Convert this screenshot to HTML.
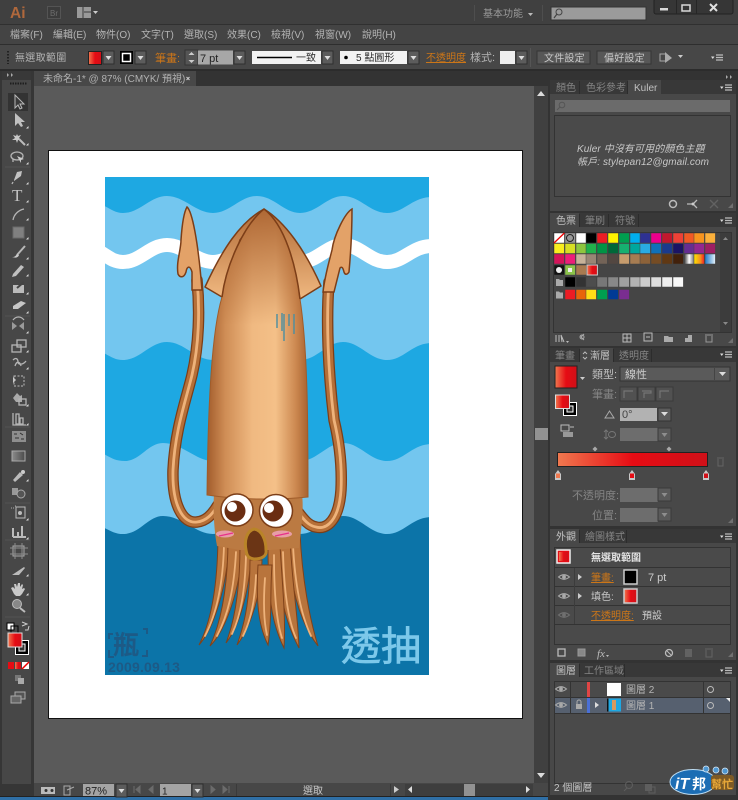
<!DOCTYPE html>
<html><head><meta charset="utf-8"><title>Illustrator</title>
<style>
html,body{margin:0;padding:0;width:738px;height:800px;overflow:hidden;background:#3c3c3c}
body>svg{display:block;filter:blur(.3px)}
text{font-family:"Liberation Sans","Noto Sans CJK TC",sans-serif;font-size:10px;fill:#b4b4b4}
.d{fill:#858585}.o{fill:#cc7618;text-decoration:underline}.w{fill:#e4e4e4}
.k{fill:#2c2c2c}
.i{fill:#b5b5b5}
.l{fill:none;stroke:#b5b5b5;stroke-width:1.3}
</style></head><body>
<svg width="738" height="800" viewBox="0 0 738 800" xmlns="http://www.w3.org/2000/svg">
<defs>
<clipPath id="artclip"><rect x="105" y="177" width="324" height="498"/></clipPath>
<linearGradient id="rg" x1="0" x2="1" y1="0" y2="0"><stop offset="0" stop-color="#f0794f"/><stop offset=".5" stop-color="#e60c14"/><stop offset="1" stop-color="#d01018"/></linearGradient>
<linearGradient id="body" x1="0" x2="1" y1="0" y2="0"><stop offset="0" stop-color="#a25c2c"/><stop offset=".18" stop-color="#cf8d55"/><stop offset=".45" stop-color="#f0b981"/><stop offset=".68" stop-color="#f4c088"/><stop offset=".88" stop-color="#cc8850"/><stop offset="1" stop-color="#a8622f"/></linearGradient>
<linearGradient id="shade" x1="0" x2="0" y1="0" y2="1"><stop offset="0" stop-color="#a85f2c" stop-opacity=".9"/><stop offset=".4" stop-color="#a85f2c" stop-opacity="0"/></linearGradient>
<linearGradient id="fin" x1="0" x2="0" y1="0" y2="1"><stop offset="0" stop-color="#b06a36"/><stop offset="1" stop-color="#f0b880"/></linearGradient>
<linearGradient id="gg" x1="0" x2="1"><stop offset="0" stop-color="#333"/><stop offset=".5" stop-color="#fff"/><stop offset="1" stop-color="#666"/></linearGradient>
<linearGradient id="gy" x1="0" x2="1"><stop offset="0" stop-color="#ffe300"/><stop offset=".6" stop-color="#f7941e"/><stop offset="1" stop-color="#ed1c24"/></linearGradient>
<linearGradient id="gb" x1="0" x2="1"><stop offset="0" stop-color="#1e78c8"/><stop offset="1" stop-color="#e8f4fc"/></linearGradient>
<linearGradient id="gt" x1="0" x2="1"><stop offset="0" stop-color="#8c8c8c"/><stop offset="1" stop-color="#4a4a4a"/></linearGradient>
<g id="dd"><rect width="11" height="13" fill="#5c5c5c" stroke="#2f2f2f"/><path d="M2.5 5h6l-3 4z" fill="#ddd"/></g>
<g id="ddd"><rect width="13" height="13" fill="#5a5a5a" stroke="#3a3a3a"/><path d="M3.5 5h6l-3 4z" fill="#8e8e8e"/></g>
<g id="eye"><path d="M-5.5 0Q0-4.5 5.5 0Q0 4.5-5.5 0Z" fill="none" stroke="#aaa" stroke-width="1.1"/><circle r="1.9" fill="#aaa"/></g>
<g id="mn"><path d="M0 1.500h3.500l-1.700 2.500z" fill="#ddd"/><path d="M5 0h7M5 2.500h7M5 5h7" stroke="#bbb" stroke-width="1.200"/></g>
<path id="tr" d="M0 2.500h2.500V0z" fill="#ddd"/>
</defs>

<!-- chrome -->
<rect width="738" height="800" fill="#3c3c3c"/>
<rect y="0" width="738" height="24" fill="#404040"/>
<rect y="24" width="738" height="1" fill="#303030"/>
<rect y="25" width="738" height="19" fill="#444"/>
<rect y="44" width="738" height="1" fill="#2e2e2e"/>
<rect y="45" width="738" height="24" fill="#474747"/>
<rect y="69" width="738" height="2" fill="#2c2c2c"/>

<!-- title bar -->
<text x="10" y="18" style="font-size:15.500px;font-weight:bold;fill:#b0683c">Ai</text>
<rect x="47.500" y="6.500" width="13" height="12" fill="#3c3c3c" stroke="#545454"/>
<text x="50" y="16" style="font-size:8px;fill:#6e6e6e">Br</text>
<rect x="77" y="7" width="14" height="11" fill="#999"/><path d="M83 7v11M84 12h7" stroke="#3c3c3c"/>
<path d="M93 11h5l-2.500 3z" fill="#ccc"/>
<path d="M474.500 5v16M542.500 5v16" stroke="#4e4e4e"/>
<text x="483" y="17" style="fill:#9a9a9a">基本功能</text>
<path d="M528 13h5l-2.500 3z" fill="#bbb"/>
<rect x="551" y="7" width="95" height="13" fill="#9b9b9b" stroke="#333"/>
<circle cx="559" cy="12" r="3" fill="none" stroke="#444"/><path d="M557 14l-3 4" stroke="#444" stroke-width="1.200"/>
<rect x="654" y="-1" width="79" height="15" rx="2" fill="#363636" stroke="#222"/>
<path d="M676.500 0v14M696.500 0v14" stroke="#262626"/>
<rect x="660" y="8" width="8" height="2.500" fill="#d8d8d8"/>
<rect x="682" y="5" width="8" height="6" fill="none" stroke="#d8d8d8" stroke-width="1.500"/>
<path d="M710 4l7 7M717 4l-7 7" stroke="#e0e0e0" stroke-width="2"/>

<!-- menu -->
<text x="10" y="38">檔案(F)</text><text x="53" y="38">編輯(E)</text><text x="96" y="38">物件(O)</text><text x="141" y="38">文字(T)</text><text x="184" y="38">選取(S)</text><text x="227" y="38">效果(C)</text><text x="271" y="38">檢視(V)</text><text x="315" y="38">視窗(W)</text><text x="362" y="38">說明(H)</text>

<!-- control bar -->
<path d="M8 51v13" stroke="#222" stroke-width="2" stroke-dasharray="1.500 1.500"/>
<text x="15" y="61" style="letter-spacing:.3px">無選取範圍</text>
<rect x="88.500" y="51.500" width="13" height="13" fill="url(#rg)" stroke="#222"/>
<use href="#dd" x="103" y="51"/>
<rect x="120" y="51" width="13" height="13" fill="#000"/><rect x="122.500" y="53.500" width="8" height="8" fill="#000" stroke="#fff" stroke-width="1.500"/>
<use href="#dd" x="135" y="51"/>
<text x="155" y="62" style="fill:#cc7618;font-size:11px">筆畫:</text>
<rect x="185" y="50" width="13" height="15" fill="#555" stroke="#333"/><path d="M191.500 52l-3 3h6zM191.500 63l-3-3h6z" fill="#ccc"/>
<rect x="198" y="50.500" width="35" height="14" fill="#a7a7a7"/>
<text x="200" y="62" style="fill:#222;font-size:11px">7 pt</text>
<use href="#dd" x="234" y="51"/>
<rect x="252" y="51" width="69" height="13" fill="#f2f2f2"/>
<path d="M257 57.500h35" stroke="#000" stroke-width="1.500"/>
<text x="296" y="61" class="k">一致</text>
<use href="#dd" x="322" y="51"/>
<rect x="340" y="51" width="67" height="13" fill="#f2f2f2"/>
<circle cx="346" cy="57.500" r="1.800" fill="#000"/><text x="356" y="61" class="k">5 點圓形</text>
<use href="#dd" x="408" y="51"/>
<text x="426" y="61" class="o">不透明度</text>
<text x="470" y="61" style="font-size:11px">樣式:</text>
<rect x="500" y="51" width="15" height="13" fill="#eee"/>
<use href="#dd" x="516" y="51"/>
<path d="M530.500 48v19" stroke="#555"/>
<rect x="537" y="51" width="53" height="13" fill="#575757" stroke="#353535"/><text x="544" y="61.500" style="fill:#c8c8c8;letter-spacing:.2px">文件設定</text>
<rect x="597" y="51" width="54" height="13" fill="#575757" stroke="#353535"/><text x="604" y="61.500" style="fill:#c8c8c8;letter-spacing:.2px">偏好設定</text>
<rect x="660" y="54" width="6" height="7" fill="none" stroke="#aaa"/><path d="M665 52l7 6-7 5z" fill="#aaa"/>
<path d="M678 55h5l-2.500 3z" fill="#ccc"/>
<use href="#mn" x="711" y="55"/>

<!-- toolbar -->
<rect x="0" y="71" width="34" height="729" fill="#363636"/>
<rect x="2" y="80" width="29" height="704" fill="#474747"/>
<rect x="2" y="71" width="29" height="9" fill="#383838"/>
<path d="M7 73l2 2-2 2zM11 73l2 2-2 2z" fill="#aaa"/>
<path d="M10 83.500h17" stroke="#1e1e1e" stroke-width="2" stroke-dasharray="1.500 1"/>
<rect x="8" y="93" width="20" height="18" fill="#333"/>
<path d="M5 167h25M5 316h25M5 427h25M5 503h25M5 540h25M5 617h25" stroke="#535353"/>
<!-- tools -->
<path d="M15 95v13l3-3 2 4 2-1-2-4h4z" fill="#3a3a3a" stroke="#b8b8b8"/>
<path d="M15 113v13l3-3 3 4 2-1-2-4h4z" fill="#c0c0c0"/>
<path d="M17 134l1 2 3-1-2 3 2 2-3 0-1 3-1-3-4 0 3-2-2-3 3 1z" fill="#c8c8c8"/><path d="M19 139l6 6" stroke="#bbb" stroke-width="2"/>
<ellipse cx="17" cy="156" rx="6" ry="4" class="l"/><path d="M17 156l7 3-3 1 0 3z" fill="#ccc"/><path d="M13 159v3" class="l"/>
<path d="M14 180l3-8 5-1-1 5-7 5z" fill="#c2c2c2"/><path d="M13 182l-1 2" class="l"/>
<text x="12" y="201" style="font-family:'Liberation Serif',serif;font-size:17px;fill:#c2c2c2">T</text>
<path d="M13 220c1-6 6-10 11-11" class="l"/>
<rect x="13" y="227" width="11" height="11" fill="#808080" stroke="#6a6a6a"/>
<path d="M25 246l-8 9" stroke="#b8b8b8" stroke-width="2"/><path d="M17 254c-2 3-3 3-5 3 3 1 6 1 7-2z" fill="#ccc"/>
<path d="M13 274l8-9 3 2-8 9-4 1z" fill="#c0c0c0"/>
<path d="M13 285h11v8H13z" fill="#bbb"/><path d="M17 288l7-6" stroke="#444" stroke-width="2"/>
<path d="M13 306l8-5 5 2-8 6h-5z" fill="#c6c6c6"/>
<path d="M12 322l5 4-5 4zM24 322l-5 4 5 4z" fill="#9a9a9a"/><path d="M13 320c3-4 8-4 11 0" class="l"/>
<rect x="12" y="345" width="9" height="7" class="l"/><rect x="17" y="340" width="9" height="7" class="l"/>
<path d="M13 360c3-3 5-1 5 2s5 3 8-1M15 366c2-6 5-4 6 0" class="l" stroke-width="2"/>
<path d="M13 377l3 3-3 3z" fill="#ccc"/><rect x="14" y="376" width="10" height="10" fill="none" stroke="#bbb" stroke-dasharray="2 1.500"/>
<path d="M13 398l4-5 3 3 2-1v7h-6z" fill="#aaa"/><rect x="19" y="399" width="7" height="6" class="l"/>
<path d="M13 413v12h13M16 414h3v10h-3zM20 418h3v6h-3z" class="l"/>
<rect x="12" y="431" width="14" height="11" fill="#8e8e8e"/><path d="M14 434h3M20 433l3 2M15 438h4M21 439h3" stroke="#333"/>
<rect x="12" y="451" width="13" height="10" fill="url(#gt)" stroke="#aaa"/>
<path d="M13 480l7-8 3 3-8 7z" fill="#bbb"/><circle cx="23" cy="472" r="2" fill="#ccc"/>
<rect x="12" y="488" width="6" height="7" fill="#999"/><circle cx="21" cy="494" r="4" fill="#555" stroke="#aaa"/>
<rect x="16" y="507" width="9" height="11" fill="none" stroke="#bbb"/><circle cx="20" cy="513" r="2" fill="#bbb"/><path d="M11 508h3M15 506h2" stroke="#aaa" stroke-dasharray="1 1"/>
<path d="M13 537v-9M18 537v-5M22 537v-11M13 537h13" stroke="#bbb" stroke-width="2"/>
<rect x="13" y="546" width="11" height="10" fill="none" stroke="#aaa"/><path d="M10 548h18M10 554h18M15 543v16M22 543v16" stroke="#8c8c8c"/>
<path d="M12 575l12-8 1 1-6 7z" fill="#bbb"/>
<path d="M14 594l-3-6 2-1 2 2-1-5h2l1 3 1-4h2v4l2-3 1 1-1 4 2-1 1 1-3 5-2 2h-4z" fill="#c8c8c8"/>
<circle cx="17" cy="604" r="4.500" fill="#888" stroke="#bbb"/><path d="M20 608l5 4" stroke="#bbb" stroke-width="2"/>
<rect x="7" y="623" width="7" height="7" fill="#fff" stroke="#000"/><rect x="11" y="626" width="7" height="7" fill="none" stroke="#000"/>
<path d="M22 622l5 2-5 2M29 626l-1 4-3 0" fill="none" stroke="#ccc"/>
<rect x="15.500" y="640.500" width="13" height="14" fill="#000" stroke="#fff"/><rect x="19" y="644" width="6" height="7" fill="#333" stroke="#fff"/>
<rect x="8" y="633" width="14" height="14" fill="url(#rg)" stroke="#ddd"/>
<rect x="8" y="662" width="6" height="7" fill="#e60c14"/><rect x="15" y="662" width="6" height="7" fill="url(#rg)"/><rect x="22" y="662" width="7" height="7" fill="#fff"/><path d="M22 669l7-7" stroke="#e00" stroke-width="1.500"/>
<rect x="15" y="675" width="6" height="6" fill="#777"/><rect x="18" y="678" width="6" height="6" fill="#aaa"/>
<rect x="15" y="692" width="10" height="7" fill="#555" stroke="#aaa"/><rect x="11" y="696" width="10" height="7" fill="#666" stroke="#aaa"/>
<use href="#tr" x="26" y="126"/><use href="#tr" x="26" y="143"/><use href="#tr" x="26" y="162"/><use href="#tr" x="26" y="182"/><use href="#tr" x="26" y="200"/><use href="#tr" x="26" y="218"/><use href="#tr" x="26" y="237"/><use href="#tr" x="26" y="257"/><use href="#tr" x="26" y="274"/><use href="#tr" x="26" y="292"/><use href="#tr" x="26" y="311"/><use href="#tr" x="26" y="331"/><use href="#tr" x="26" y="350"/><use href="#tr" x="26" y="367"/><use href="#tr" x="26" y="404"/><use href="#tr" x="26" y="423"/><use href="#tr" x="26" y="479"/><use href="#tr" x="26" y="518"/><use href="#tr" x="26" y="537"/><use href="#tr" x="26" y="574"/><use href="#tr" x="26" y="593"/>

<!-- doc tab strip -->
<rect x="34" y="71" width="514" height="15" fill="#333"/>
<rect x="34" y="71" width="162" height="15" fill="#484848"/>
<text x="43" y="82" style="fill:#b0b0b0">未命名-1* @ 87% (CMYK/ 預視)</text>
<path d="M186.500 77l3 3M189.500 77l-3 3" stroke="#ccc"/>

<!-- canvas -->
<rect x="34" y="86" width="500" height="697" fill="#5a5a5a"/>
<rect x="534" y="86" width="14" height="697" fill="#404040"/>
<path d="M537 96l4-5 4 5z" fill="#ddd"/><path d="M537 773l4 5 4-5z" fill="#ddd"/>
<rect x="535" y="428" width="13" height="12" fill="#929292"/>
<rect x="48.500" y="150.500" width="474" height="568" fill="#fff" stroke="#111"/>

<!-- art -->
<g clip-path="url(#artclip)">
<rect x="105" y="177" width="324" height="498" fill="#1ea8e2"/>
<path d="M100 204C110 208 114 213 123 213C140 213 150 196 167 196C184 196 196 213 213 213C230 213 240 196 257 196C274 196 284 213 300 213C317 213 327 196 343 196C360 196 370 213 387 213C404 213 412 197 432 197V680H100Z" fill="#73c6ef"/>
<path d="M100 252C110 258 114 262 123 262C140 262 150 245 167 245C184 245 196 262 213 262C230 262 240 245 257 245C274 245 284 262 300 262C317 262 327 245 343 245C360 245 370 262 387 262C404 262 412 246 432 246" fill="none" stroke="#fff" stroke-width="14"/>
<path d="M100 351C110 356 114 360 123 360C140 360 150 342 167 342C184 342 196 360 213 360C230 360 240 342 257 342C274 342 284 360 300 360C317 360 327 342 343 342C360 342 370 360 387 360C404 360 412 343 432 343V680H100Z" fill="#1ea8e2"/>
<path d="M100 452C110 457 114 461 125 461C140 461 148 443 163 443C182 443 196 461 213 461C230 461 240 443 257 443C274 443 284 461 300 461C317 461 327 443 343 443C360 443 370 461 387 461C404 461 412 444 432 444V680H100Z" fill="#73c6ef"/>
<path d="M100 526C110 530 114 534 123 534C140 534 148 516 163 516C182 516 196 534 213 534C230 534 240 516 257 516C274 516 284 534 300 534C317 534 327 516 343 516C360 516 370 534 387 534C404 534 412 517 432 517V680H100Z" fill="#0c74a8"/>

<!-- arms -->
<g fill="none" stroke-linecap="round">
<path d="M197 280C200 310 199 345 192 375C186 400 175 430 173 470C172 505 183 524 197 522C206 521 212 515 218 505" stroke="#7c3e18" stroke-width="11.500"/>
<path d="M197 280C200 310 199 345 192 375C186 400 175 430 173 470C172 505 183 524 197 522C206 521 212 515 218 505" stroke="#b56f38" stroke-width="9"/>
<path d="M197 280C200 310 199 345 192 375C186 400 175 430 173 470C172 505 183 524 197 522C206 521 212 515 218 505" stroke="#eeb27a" stroke-width="2.800"/>
<path d="M329 282C326 320 328 370 334 420C340 445 342 470 341 490C339 520 327 530 316 527C309 526 304 520 298 512" stroke="#7c3e18" stroke-width="11.500"/>
<path d="M329 282C326 320 328 370 334 420C340 445 342 470 341 490C339 520 327 530 316 527C309 526 304 520 298 512" stroke="#b56f38" stroke-width="9"/>
<path d="M329 282C326 320 328 370 334 420C340 445 342 470 341 490C339 520 327 530 316 527C309 526 304 520 298 512" stroke="#eeb27a" stroke-width="2.800"/>
</g>
<path d="M187 207C192 211 198 240 202 290L192 290L192 272C190 265 187 266 186 272C184 278 180 278 178 274C176 262 181 250 181 240C182 225 184 212 187 207Z" fill="#e3a268" stroke="#7c3e18" stroke-width="1.500"/>
<path d="M352 209C345 213 334 235 332 250C329 262 325 275 323 292L334 292L340 268C342 266 343 268 344 272C345 275 347 275 349 272C351 250 352 225 352 209Z" fill="#e3a268" stroke="#7c3e18" stroke-width="1.500"/>

<!-- tentacles -->
<g stroke="#80421a" stroke-width="1" fill="#b8743c">
<path d="M218 532C218 580 212 620 199 645C214 628 226 590 230 540Z"/>
<path d="M228 538C228 585 222 620 210 646C226 630 240 590 243 545Z"/>
<path d="M287 532C290 585 298 620 318 646C310 620 302 580 300 532Z"/>
<path d="M277 538C278 590 284 620 299 648C298 615 292 585 290 538Z"/>
<path d="M240 545C240 590 235 620 226 643C240 625 250 590 252 545Z"/>
<path d="M268 545C268 590 270 620 284 648C286 620 282 580 280 545Z"/>
<path d="M250 560C250 595 246 620 237 645C252 625 262 590 262 560Z"/>
<path d="M258 565C256 600 258 625 268 645C272 620 270 590 272 565Z"/>
</g>
<g fill="none" stroke="#eeb27a" stroke-width="1.800" stroke-linecap="round">
<path d="M224 545C223 585 216 615 205 636"/><path d="M236 552C234 590 228 615 217 636"/><path d="M246 556C245 590 241 615 232 634"/><path d="M256 575C255 600 251 620 243 636"/><path d="M265 578C263 605 264 622 267 635"/><path d="M274 555C274 590 276 620 282 638"/><path d="M283 552C284 590 288 620 296 638"/><path d="M293 545C295 585 301 615 311 636"/>
</g>
<!-- head -->
<path d="M214 494H302C304 510 301 530 299 548L270 550H240L217 546C214 530 213 510 214 494Z" fill="#bb7a42"/>
<!-- body -->
<path d="M264 209C240 222 222 250 205 287L222 297L240 240Z" fill="url(#fin)" stroke="#7c3e18" stroke-width="1.500" stroke-linejoin="round"/>
<path d="M264 209C285 222 305 250 321 286L300 299L285 240Z" fill="url(#fin)" stroke="#7c3e18" stroke-width="1.500" stroke-linejoin="round"/>
<path d="M264 209C244 225 226 265 222 297C212 330 208 400 207 495C240 500 280 500 308 497C308 430 308 350 300 299C296 265 285 225 264 209Z" fill="url(#body)" stroke="#a05c2a" stroke-width="1"/>
<path d="M264 209C244 225 226 265 222 297C212 330 208 400 207 495C240 500 280 500 308 497C308 430 308 350 300 299C296 265 285 225 264 209Z" fill="url(#shade)"/>
<path d="M264 209C244 225 226 265 222 297M264 209C285 225 296 265 300 299" fill="none" stroke="#7c3e18" stroke-width="1.500"/>
<path d="M277 314v14M282 313v18M284 314v27M289 314v12M294 314v20" stroke="#4f8fa0" stroke-width="1.600" opacity=".9"/>
<!-- face -->
<ellipse cx="225" cy="534" rx="9" ry="3.500" fill="#f4a6c0" opacity=".8"/><ellipse cx="282" cy="534" rx="10" ry="3.500" fill="#f4a6c0" opacity=".8"/>
<path d="M219 536l14-3M275 536l14-3" stroke="#e8308a" stroke-width="1.200"/>
<circle cx="237" cy="510" r="16" fill="#fff" stroke="#7c3e18" stroke-width="1.500"/><circle cx="276" cy="511" r="16.500" fill="#fff" stroke="#7c3e18" stroke-width="1.500"/>
<circle cx="235" cy="511" r="10.500" fill="#6a2d12"/><circle cx="273" cy="511" r="10.500" fill="#6a2d12"/>
<circle cx="232" cy="507" r="5" fill="#fff"/><circle cx="269" cy="508" r="5" fill="#fff"/>
<path d="M254 529C247 531 244 540 246 550C247 556 248 558 254 559C262 559 267 556 266 550C266 540 262 530 254 529Z" fill="#6b3515" stroke="#b98428" stroke-width="3"/>
<text x="341" y="660" style="font-size:40px;fill:#7cc8ea;stroke:#7cc8ea;stroke-width:.7px">透抽</text>
<text x="108" y="672" style="font-size:14px;font-weight:bold;fill:#1d5a86;letter-spacing:.2px">2009.09.13</text>
<text x="113" y="654" style="font-size:26px;fill:#1d5a86;font-weight:bold">瓶</text>
<path d="M113 634h-4v5M143 629h4v5M109 650v7h5M147 650v6h-5" fill="none" stroke="#1d5a86" stroke-width="2"/>
</g>

<!-- status bar -->
<rect x="34" y="783" width="514" height="13" fill="#474747"/>
<rect x="0" y="796" width="738" height="1" fill="#222"/>
<rect x="0" y="797" width="738" height="3" fill="#2f6fa6"/>
<rect x="41" y="787" width="14" height="7" fill="#bbb"/><circle cx="46" cy="790.500" r="1.500" fill="#333"/><circle cx="52" cy="790.500" r="1.500" fill="#333"/>
<path d="M64 786h6v9h-6zM67 790l7-3" fill="none" stroke="#aaa"/>
<rect x="83" y="784" width="31" height="12" fill="#a4a4a4"/><text x="85" y="794.500" style="fill:#222;font-size:11px">87%</text>
<use href="#dd" x="116" y="784"/>
<path d="M134 786v7M140 786l-4 3.500 4 3.500zM153 786l-4 3.500 4 3.500z" fill="#6b6b6b" stroke="#6b6b6b"/>
<rect x="160" y="784" width="31" height="12" fill="#a4a4a4"/><text x="162" y="794.500" style="fill:#222">1</text>
<use href="#dd" x="192" y="784"/>
<path d="M211 786l4 3.500-4 3.500zM223 786l4 3.500-4 3.500zM229 786v7" fill="#6b6b6b" stroke="#6b6b6b"/>
<path d="M236.500 784v12M390.500 784v12" stroke="#3a3a3a"/>
<text x="303" y="794" style="fill:#c8c8c8">選取</text>
<path d="M394 786l5 3.500-5 3.500z" fill="#ccc"/>
<rect x="405" y="784" width="128" height="12" fill="#3e3e3e"/>
<path d="M412 786l-4 3.500 4 3.500zM526 786l4 3.500-4 3.500z" fill="#ddd"/>
<rect x="464" y="784" width="11" height="12" fill="#929292"/>

<!-- right panels -->
<rect x="548" y="71" width="190" height="729" fill="#333"/>
<path d="M726 75l2 2-2 2zM730 75l2 2-2 2z" fill="#aaa"/>

<!-- Kuler -->
<rect x="550" y="80" width="186" height="131" fill="#484848"/>
<rect x="550" y="80" width="186" height="14" fill="#383838"/>
<rect x="628" y="80" width="33" height="15" fill="#484848"/>
<path d="M579.500 81v13M627.500 81v13" stroke="#2c2c2c"/>
<text x="556" y="91" class="d">顏色</text><text x="586" y="91" class="d">色彩參考</text><text x="634" y="91" style="fill:#c0c0c0">Kuler</text>
<use href="#mn" x="720" y="85"/>
<rect x="555" y="100" width="175" height="12" fill="#6b6b6b"/>
<circle cx="562" cy="105" r="2.800" fill="none" stroke="#555"/><path d="M560 107l-3 3" stroke="#555"/>
<rect x="554.500" y="115.500" width="176" height="81" fill="#4a4a4a" stroke="#333"/>
<text x="577" y="152" style="fill:#c8c8c8;font-style:italic;letter-spacing:.1px">Kuler 中沒有可用的顏色主題</text>
<text x="577" y="165" style="fill:#c8c8c8;font-style:italic;letter-spacing:.1px">帳戶: stylepan12@gmail.com</text>
<circle cx="673" cy="204" r="3.500" fill="none" stroke="#bbb" stroke-width="1.500"/>
<path d="M687 204h7M697 200l-4 4 4 4" fill="none" stroke="#bbb" stroke-width="1.300"/><circle cx="693" cy="204" r="1.500" fill="#ccc"/>
<path d="M710 200l8 8M718 200l-8 8" stroke="#626262" stroke-width="1.300"/>
<path d="M728 208h5v-5zM731 209v-1" fill="#707070"/>

<!-- Swatches -->
<rect x="550" y="213" width="186" height="133" fill="#484848"/>
<rect x="550" y="213" width="186" height="14" fill="#383838"/>
<rect x="550" y="213" width="29" height="15" fill="#484848"/>
<path d="M579.500 214v13M608.500 214v13M638.500 214v13" stroke="#2c2c2c"/>
<text x="556" y="224" style="fill:#c0c0c0">色票</text><text x="585" y="224" class="d">筆刷</text><text x="615" y="224" class="d">符號</text>
<use href="#mn" x="720" y="218"/>
<rect x="553.500" y="232.500" width="178" height="100" fill="#454545" stroke="#333"/>
<rect x="720" y="233" width="11" height="99" fill="#3c3c3c"/>
<path d="M723 240l2.500-3 2.500 3zM723 322l2.500 3 2.500-3z" fill="#888"/>
<g stroke="#444" stroke-width=".5">
<rect x="554" y="233" width="10.400" height="10" fill="#fff"/>
<rect x="565" y="233" width="10.400" height="10" fill="#999"/>
<rect x="576" y="233" width="10.400" height="10" fill="#fff"/><rect x="586" y="233" width="10.400" height="10" fill="#000"/><rect x="597" y="233" width="10.400" height="10" fill="#ed1c24" /><rect x="608" y="233" width="10.400" height="10" fill="#fff200"/><rect x="619" y="233" width="10.400" height="10" fill="#009e4f"/><rect x="630" y="233" width="10.400" height="10" fill="#00aeef"/><rect x="640" y="233" width="10.400" height="10" fill="#2e3192"/><rect x="651" y="233" width="10.400" height="10" fill="#ec008c"/><rect x="662" y="233" width="10.400" height="10" fill="#c1182d"/><rect x="673" y="233" width="10.400" height="10" fill="#ef4136"/><rect x="684" y="233" width="10.400" height="10" fill="#f15a24"/><rect x="694" y="233" width="10.400" height="10" fill="#f7941e"/><rect x="705" y="233" width="10.400" height="10" fill="#fbb03b"/>
<rect x="554" y="243.500" width="10.400" height="10" fill="#f9ed1e"/><rect x="565" y="243.500" width="10.400" height="10" fill="#d7df23"/><rect x="576" y="243.500" width="10.400" height="10" fill="#8dc63f"/><rect x="586" y="243.500" width="10.400" height="10" fill="#22b14c"/><rect x="597" y="243.500" width="10.400" height="10" fill="#009444"/><rect x="608" y="243.500" width="10.400" height="10" fill="#006838"/><rect x="619" y="243.500" width="10.400" height="10" fill="#16b070"/><rect x="630" y="243.500" width="10.400" height="10" fill="#00a79d"/><rect x="640" y="243.500" width="10.400" height="10" fill="#29abe2"/><rect x="651" y="243.500" width="10.400" height="10" fill="#1071b9"/><rect x="662" y="243.500" width="10.400" height="10" fill="#1b3a8c"/><rect x="673" y="243.500" width="10.400" height="10" fill="#1b1464"/><rect x="684" y="243.500" width="10.400" height="10" fill="#662d91"/><rect x="694" y="243.500" width="10.400" height="10" fill="#93278f"/><rect x="705" y="243.500" width="10.400" height="10" fill="#9e1f63"/>
<rect x="554" y="254" width="10.400" height="10" fill="#d4145a"/><rect x="565" y="254" width="10.400" height="10" fill="#ed1e79"/><rect x="576" y="254" width="10.400" height="10" fill="#c7b299"/><rect x="586" y="254" width="10.400" height="10" fill="#998675"/><rect x="597" y="254" width="10.400" height="10" fill="#736357"/><rect x="608" y="254" width="10.400" height="10" fill="#534741"/><rect x="619" y="254" width="10.400" height="10" fill="#c69c6d"/><rect x="630" y="254" width="10.400" height="10" fill="#a67c52"/><rect x="640" y="254" width="10.400" height="10" fill="#8c6239"/><rect x="651" y="254" width="10.400" height="10" fill="#754c24"/><rect x="662" y="254" width="10.400" height="10" fill="#603813"/><rect x="673" y="254" width="10.400" height="10" fill="#42210b"/><rect x="684" y="254" width="10.400" height="10" fill="url(#gg)"/><rect x="694" y="254" width="10.400" height="10" fill="url(#gy)"/><rect x="705" y="254" width="10.400" height="10" fill="url(#gb)"/>
<rect x="554" y="265" width="10.400" height="10" fill="#111"/><rect x="565" y="265" width="10.400" height="10" fill="#8bc34a"/><rect x="576" y="265" width="10.400" height="10" fill="#a87a50"/><rect x="587" y="265" width="10.400" height="10" fill="url(#rg)" stroke="#ccc" stroke-width="1"/>
<rect x="565" y="277" width="10.400" height="10" fill="#000"/><rect x="576" y="277" width="10.400" height="10" fill="#333"/><rect x="586" y="277" width="10.400" height="10" fill="#4d4d4d"/><rect x="597" y="277" width="10.400" height="10" fill="#777"/><rect x="608" y="277" width="10.400" height="10" fill="#888"/><rect x="619" y="277" width="10.400" height="10" fill="#a0a0a0"/><rect x="630" y="277" width="10.400" height="10" fill="#b3b3b3"/><rect x="640" y="277" width="10.400" height="10" fill="#ccc"/><rect x="651" y="277" width="10.400" height="10" fill="#ddd"/><rect x="662" y="277" width="10.400" height="10" fill="#eee"/><rect x="673" y="277" width="10.400" height="10" fill="#f8f8f8"/>
<rect x="565" y="289.500" width="10.400" height="10" fill="#ed1c24"/><rect x="576" y="289.500" width="10.400" height="10" fill="#e8650a"/><rect x="586" y="289.500" width="10.400" height="10" fill="#ffde17"/><rect x="597" y="289.500" width="10.400" height="10" fill="#009e4f"/><rect x="608" y="289.500" width="10.400" height="10" fill="#003a94"/><rect x="619" y="289.500" width="10.400" height="10" fill="#7a2d90"/>
</g>
<path d="M554 243l10.400-10" stroke="#e00" stroke-width="1.300"/>
<circle cx="570" cy="238" r="3.500" fill="none" stroke="#222"/><circle cx="559" cy="270" r="3" fill="#eee"/><rect x="568" y="268" width="4" height="4" fill="#eee"/>
<path d="M556 279h3l1 1h3v6h-7z" fill="#aaa"/><path d="M556 291.500h3l1 1h3v6h-7z" fill="#aaa"/>
<path d="M556 342v-7M559 342v-7M562 342l-1-7 3 7" stroke="#bbb" fill="none"/><path d="M566 341h3l-1.500 2z" fill="#bbb"/>
<circle cx="582" cy="337" r="2" fill="none" stroke="#aaa"/><path d="M584 334l-3 3 3 3" fill="none" stroke="#aaa"/>
<rect x="623" y="334" width="8" height="8" fill="none" stroke="#bbb"/><path d="M623 338h8M627 334v8" stroke="#bbb"/>
<rect x="644" y="333" width="8" height="8" fill="none" stroke="#bbb"/><path d="M646 337h4" stroke="#bbb"/>
<path d="M664 336h4l1 1h4v5h-9z" fill="#aaa"/><path d="M685 335h7v7h-7z" fill="#aaa"/><path d="M685 335h3v3h-3z" fill="#484848"/>
<path d="M705 335h8M706 336v6h6v-6" fill="none" stroke="#999"/>
<path d="M728 343h5v-5z" fill="#707070"/>

<!-- Gradient -->
<rect x="550" y="348" width="186" height="178" fill="#484848"/>
<rect x="550" y="348" width="186" height="14" fill="#383838"/>
<rect x="580" y="348" width="33" height="15" fill="#484848"/>
<path d="M579.500 349v13M613.500 349v13M651.500 349v13" stroke="#2c2c2c"/>
<text x="555" y="359" class="d">筆畫</text>
<path d="M583 354l2-2 2 2M583 357l2 2 2-2" fill="none" stroke="#bbb"/>
<text x="590" y="359" style="fill:#c0c0c0">漸層</text><text x="619" y="359" class="d">透明度</text>
<use href="#mn" x="720" y="352"/>
<rect x="555" y="366" width="22" height="22" fill="url(#rg)" stroke="#222"/>
<path d="M580 377h5l-2.500 3z" fill="#ccc"/>
<text x="592" y="378" style="font-size:11px;fill:#c2c2c2">類型:</text>
<rect x="620" y="367" width="110" height="14" fill="#5a5a5a" stroke="#333"/>
<text x="625" y="378" style="fill:#cccccc;font-size:11px">線性</text>
<path d="M714.500 368v12" stroke="#444"/><path d="M719 372h7l-3.500 4z" fill="#ddd"/>
<rect x="563.500" y="402.500" width="13" height="13" fill="#000" stroke="#fff"/><rect x="567" y="406" width="6" height="6" fill="#333" stroke="#fff"/>
<rect x="555.500" y="395" width="14" height="13.500" fill="url(#rg)" stroke="#ddd"/>
<text x="592" y="398" class="d" style="font-size:11px">筆畫:</text>
<rect x="620" y="387" width="17" height="14" fill="#515151" stroke="#3a3a3a"/><rect x="638" y="387" width="17" height="14" fill="#515151" stroke="#3a3a3a"/><rect x="656" y="387" width="17" height="14" fill="#515151" stroke="#3a3a3a"/>
<path d="M624 398v-7h9M642 391h9v2h-7v5M660 398v-7h9" fill="none" stroke="#757575" stroke-width="1.200"/>
<path d="M605 418l4.500-7 4.500 7zM605 418h9" fill="none" stroke="#aaa"/>
<rect x="620" y="408" width="37" height="13" fill="#b2b2b2"/><text x="622" y="418" style="fill:#444;font-size:11px">0°</text>
<rect x="658" y="408" width="13" height="13" fill="#5c5c5c" stroke="#333"/><path d="M661 412h7l-3.500 4z" fill="#ddd"/>
<rect x="561" y="425" width="8" height="6" fill="none" stroke="#bbb"/><rect x="563" y="432" width="10" height="5" fill="#999"/><path d="M570 427h4" stroke="#bbb"/>
<path d="M606 430v9M604 432l2-2 2 2M604 437l2 2 2-2" fill="none" stroke="#777"/><ellipse cx="612" cy="434.500" rx="3.500" ry="3" fill="none" stroke="#777"/>
<rect x="620" y="428" width="38" height="13" fill="#6d6d6d"/><use href="#ddd" x="658" y="428"/>
<path d="M595 446.500l2.500 2.500-2.500 2.500-2.500-2.500zM669 446.500l2.500 2.500-2.500 2.500-2.500-2.500z" fill="#aaa"/>
<rect x="557.500" y="452.500" width="150" height="14" fill="url(#rg)" stroke="#222"/>
<path d="M717 458h7M718 459v7h5v-7" fill="none" stroke="#646464"/>
<g><path d="M555 474l3-4 3 4v6h-6z" fill="#c8c8c8"/><rect x="556" y="473.500" width="4" height="4.500" fill="#f0794f"/>
<path d="M629 474l3-4 3 4v6h-6z" fill="#c8c8c8"/><rect x="630" y="473.500" width="4" height="4.500" fill="#e60c14"/>
<path d="M703 474l3-4 3 4v6h-6z" fill="#c8c8c8"/><rect x="704" y="473.500" width="4" height="4.500" fill="#d01018"/></g>
<text x="572" y="499" class="d" style="font-size:11px">不透明度:</text>
<rect x="620" y="488" width="38" height="14" fill="#6d6d6d"/><use href="#ddd" x="658" y="488"/>
<text x="592" y="519" class="d" style="font-size:11px">位置:</text>
<rect x="620" y="508" width="38" height="14" fill="#6d6d6d"/><use href="#ddd" x="658" y="508"/>
<path d="M728 523h5v-5z" fill="#707070"/>

<!-- Appearance -->
<rect x="550" y="529" width="186" height="131" fill="#484848"/>
<rect x="550" y="529" width="186" height="14" fill="#383838"/>
<rect x="550" y="529" width="29" height="15" fill="#484848"/>
<path d="M579.500 530v13M626.500 530v13" stroke="#2c2c2c"/>
<text x="556" y="540" style="fill:#c0c0c0">外觀</text><text x="585" y="540" class="d">繪圖樣式</text>
<use href="#mn" x="720" y="534"/>
<rect x="554.500" y="547.500" width="176" height="97" fill="#4a4a4a" stroke="#333"/>
<path d="M555 567.500h175M555 586.500h175M555 605.500h175M555 624.500h175" stroke="#333"/>
<path d="M574.500 568v56" stroke="#3c3c3c"/>
<rect x="557" y="550" width="13" height="13" fill="#e60c14" stroke="#eee" stroke-width="1.500"/><rect x="559" y="552" width="9" height="9" fill="url(#rg)"/>
<text x="591" y="561" class="w" style="font-weight:bold">無選取範圍</text>
<use href="#eye" x="564" y="577"/><use href="#eye" x="564" y="596"/>
<g opacity=".4"><use href="#eye" x="564" y="615"/></g>
<path d="M578 574l4 3-4 3zM578 593l4 3-4 3z" fill="#ccc"/>
<text x="591" y="581" class="o">筆畫:</text>
<rect x="624" y="570" width="13" height="14" fill="#000" stroke="#ccc" stroke-width="1.500"/>
<text x="648" y="581" style="fill:#cccccc;font-size:11px">7 pt</text>
<text x="591" y="600" style="fill:#c8c8c8">填色:</text>
<rect x="624" y="589" width="13" height="14" fill="url(#rg)" stroke="#ccc" stroke-width="1.500"/>
<text x="591" y="619" class="o">不透明度:</text><text x="642" y="619" style="fill:#cccccc">預設</text>
<rect x="558" y="649" width="7" height="7" fill="none" stroke="#bbb" stroke-width="1.300"/>
<rect x="578" y="649" width="7" height="7" fill="#888" stroke="#999"/>
<text x="597" y="657" style="font-family:'Liberation Serif',serif;font-style:italic;font-size:11px;fill:#bbb">fx</text><path d="M606 655h3l-1.500 2z" fill="#bbb"/>
<circle cx="669" cy="653" r="3.500" fill="none" stroke="#bbb" stroke-width="1.300"/><path d="M667 651l4 4" stroke="#bbb"/>
<path d="M685 649h7v8h-7z" fill="#626262"/><path d="M705 649h8M706 650v7h6v-7" fill="none" stroke="#636363"/>
<path d="M728 657h5v-5z" fill="#707070"/>

<!-- Layers -->
<rect x="550" y="663" width="186" height="132" fill="#484848"/>
<rect x="550" y="663" width="186" height="14" fill="#383838"/>
<rect x="550" y="663" width="29" height="15" fill="#484848"/>
<path d="M579.500 664v13M624.500 664v13" stroke="#2c2c2c"/>
<text x="556" y="674" style="fill:#c0c0c0">圖層</text><text x="584" y="674" class="d">工作區域</text>
<use href="#mn" x="720" y="668"/>
<rect x="554.500" y="681.500" width="176" height="102" fill="#4a4a4a" stroke="#333"/>
<rect x="555" y="698" width="175" height="15" fill="#56606f"/>
<path d="M555 697.500h175M555 713.500h175M570.500 682v31M703.500 682v31" stroke="#333"/>
<use href="#eye" x="561" y="689"/><use href="#eye" x="561" y="705"/>
<rect x="587" y="682" width="3" height="15" fill="#e04545"/>
<rect x="587" y="698" width="3" height="15" fill="#4a70d8"/>
<rect x="576" y="704" width="6" height="5" fill="#aaa"/><path d="M577 704v-2a2 2 0 014 0v2" fill="none" stroke="#aaa"/>
<path d="M595 702l4 3-4 3z" fill="#ddd"/>
<rect x="607" y="683" width="14" height="13" fill="#fff"/>
<rect x="607" y="698.500" width="14" height="13" fill="#1ea8e2"/><rect x="612" y="700" width="4" height="10" fill="#d79a5e"/><rect x="607" y="698.500" width="1.500" height="13" fill="#111"/>
<text x="626" y="693" style="fill:#b4b4b4">圖層 2</text><text x="626" y="709" style="fill:#b4b4b4">圖層 1</text>
<circle cx="710.500" cy="689.500" r="3" fill="none" stroke="#bbb"/><circle cx="710.500" cy="705.500" r="3" fill="none" stroke="#bbb"/>
<path d="M726 698h4v4z" fill="#eee"/>
<text x="554" y="791" style="fill:#c4c4c4">2 個圖層</text>
<circle cx="629" cy="785" r="3.500" fill="none" stroke="#5e5e5e"/><path d="M627 788l-3 3" stroke="#5e5e5e"/>
<rect x="645" y="784" width="7" height="7" fill="#5e5e5e"/><rect x="649" y="787" width="6" height="6" fill="none" stroke="#5e5e5e"/>
<!-- logo -->
<ellipse cx="693" cy="782" rx="23" ry="12.500" fill="#1c6db4" stroke="#bcdcf2" stroke-width="1"/>
<text x="675" y="789" style="font-size:16px;font-weight:bold;font-style:italic;fill:#fff">iT</text>
<text x="692" y="789" style="font-size:14px;font-weight:bold;fill:#fff">邦</text>
<rect x="711" y="775" width="23" height="15" rx="3" fill="#7d5a25"/>
<text x="711" y="788" style="font-size:11px;font-weight:bold;fill:#e8a838">幫忙</text>
<circle cx="706" cy="769" r="3" fill="#4f97d0" stroke="#dcecf8" stroke-width=".7"/><circle cx="716" cy="770" r="3" fill="#4f97d0" stroke="#dcecf8" stroke-width=".7"/><circle cx="725" cy="771" r="3" fill="#4f97d0" stroke="#dcecf8" stroke-width=".7"/>
</svg>
</body></html>
